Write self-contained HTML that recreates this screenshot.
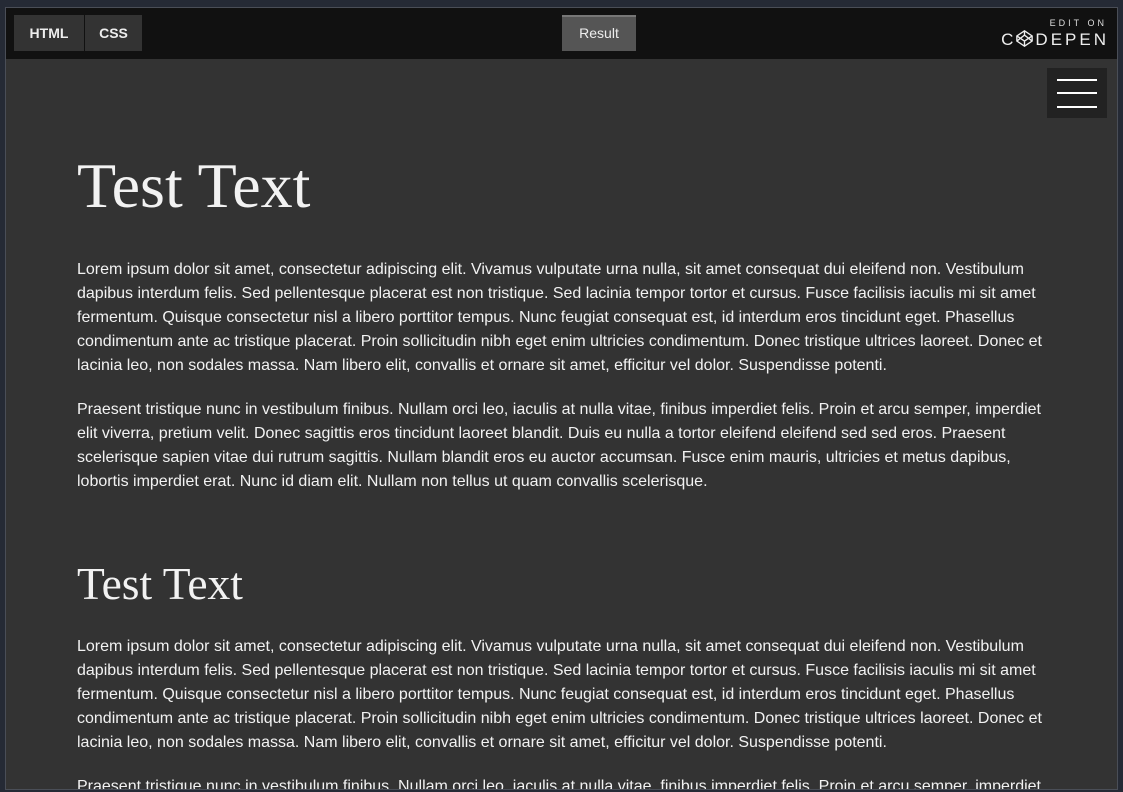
<!DOCTYPE html>
<html><head><style>
*{margin:0;padding:0;box-sizing:border-box}
body{width:1123px;height:792px;background:#252a35;overflow:hidden;position:relative;font-family:"Liberation Sans",sans-serif}
#frame{position:absolute;left:5px;top:7px;width:1113px;height:783px;border:1px solid #4a4e57;background:#333;overflow:hidden}
#bar{position:absolute;left:0;top:0;width:100%;height:51px;background:#111}
.tab{position:absolute;top:7px;height:36px;background:#333;color:#eee;font-size:14px;font-weight:bold;line-height:36px;text-align:center}
#menu{position:absolute;left:1041px;top:60px;width:60px;height:50px;background:#222}
#menu i{position:absolute;left:10px;width:40px;height:2px;background:#fff}
#content{position:absolute;left:71px;top:0;width:968px;color:#f2f2f2}
h1{font-family:"Liberation Serif",serif;font-weight:normal;font-size:64px;position:absolute;top:141px;white-space:nowrap}
h2{font-family:"Liberation Serif",serif;font-weight:normal;font-size:45.5px;position:absolute;top:549px;white-space:nowrap}
p{position:absolute;left:0;width:968px;font-size:16px;line-height:24px}
</style></head><body>
<div id="frame">
<div id="bar">
<div class="tab" style="left:8px;width:70px">HTML</div>
<div class="tab" style="left:79px;width:57px">CSS</div>
<div class="tab" style="left:556px;width:74px;background:#555;border-top:2px solid #777;font-weight:normal;line-height:32px">Result</div>
<div style="position:absolute;right:10px;top:10px;color:#ddd;font-size:9px;letter-spacing:3px">EDIT ON</div>
<div style="position:absolute;right:8px;top:22px;color:#eee;font-size:17px;letter-spacing:3px;line-height:18px">C<svg width="17" height="17" viewBox="0 0 20 20" style="vertical-align:-2px;margin-right:2px" fill="none" stroke="#eee" stroke-width="1.6"><path d="M10 1L19 7V13L10 19L1 13V7Z M10 1V6 M19 7L10 13L1 7 M10 19V13 M1 13L10 6L19 13"/></svg>DEPEN</div>
</div>
<div id="menu"><i style="top:11px"></i><i style="top:24px"></i><i style="top:38px"></i></div>
<div id="content">
<h1>Test Text</h1>
<p style="top:250px">Lorem ipsum dolor sit amet, consectetur adipiscing elit. Vivamus vulputate urna nulla, sit amet consequat dui eleifend non. Vestibulum dapibus interdum felis. Sed pellentesque placerat est non tristique. Sed lacinia tempor tortor et cursus. Fusce facilisis iaculis mi sit amet fermentum. Quisque consectetur nisl a libero porttitor tempus. Nunc feugiat consequat est, id interdum eros tincidunt eget. Phasellus condimentum ante ac tristique placerat. Proin sollicitudin nibh eget enim ultricies condimentum. Donec tristique ultrices laoreet. Donec et lacinia leo, non sodales massa. Nam libero elit, convallis et ornare sit amet, efficitur vel dolor. Suspendisse potenti.</p>
<p style="top:390px">Praesent tristique nunc in vestibulum finibus. Nullam orci leo, iaculis at nulla vitae, finibus imperdiet felis. Proin et arcu semper, imperdiet elit viverra, pretium velit. Donec sagittis eros tincidunt laoreet blandit. Duis eu nulla a tortor eleifend eleifend sed sed eros. Praesent scelerisque sapien vitae dui rutrum sagittis. Nullam blandit eros eu auctor accumsan. Fusce enim mauris, ultricies et metus dapibus, lobortis imperdiet erat. Nunc id diam elit. Nullam non tellus ut quam convallis scelerisque.</p>
<h2>Test Text</h2>
<p style="top:627px">Lorem ipsum dolor sit amet, consectetur adipiscing elit. Vivamus vulputate urna nulla, sit amet consequat dui eleifend non. Vestibulum dapibus interdum felis. Sed pellentesque placerat est non tristique. Sed lacinia tempor tortor et cursus. Fusce facilisis iaculis mi sit amet fermentum. Quisque consectetur nisl a libero porttitor tempus. Nunc feugiat consequat est, id interdum eros tincidunt eget. Phasellus condimentum ante ac tristique placerat. Proin sollicitudin nibh eget enim ultricies condimentum. Donec tristique ultrices laoreet. Donec et lacinia leo, non sodales massa. Nam libero elit, convallis et ornare sit amet, efficitur vel dolor. Suspendisse potenti.</p>
<p style="top:767px">Praesent tristique nunc in vestibulum finibus. Nullam orci leo, iaculis at nulla vitae, finibus imperdiet felis. Proin et arcu semper, imperdiet elit viverra, pretium velit.</p>
</div>
</div>
</body></html>
